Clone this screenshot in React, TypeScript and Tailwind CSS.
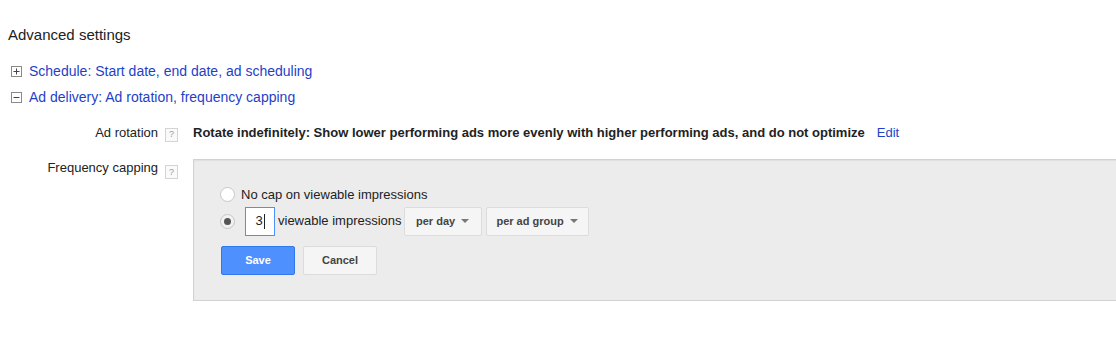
import React from "react";

const HelpBox = () => (
  <span className="inline-flex h-[14px] w-[13px] shrink-0 items-center justify-center border border-[#d4d4d4] bg-[#fafafa] text-[9px] leading-none text-[#999]">
    ?
  </span>
);

const ToggleBox = ({ open }: { open: boolean }) => (
  <svg width="11" height="11" viewBox="0 0 11 11" className="shrink-0">
    <rect x="0.5" y="0.5" width="10" height="10" fill="#fff" stroke="#8a8a8a" />
    <line x1="2.5" y1="5.5" x2="8.5" y2="5.5" stroke="#444" />
    {!open && <line x1="5.5" y1="2.5" x2="5.5" y2="8.5" stroke="#444" />}
  </svg>
);

const Caret = () => (
  <svg width="8" height="4" viewBox="0 0 8 4" className="ml-[6px]">
    <path d="M0 0 L8 0 L4 4 Z" fill="#777" />
  </svg>
);

const Radio = ({ checked }: { checked?: boolean }) => (
  <span
    className={`inline-flex h-[15px] w-[15px] shrink-0 items-center justify-center rounded-full border border-[#c6c6c6] ${
      checked ? "bg-[#f1f1f1]" : "bg-white"
    }`}
  >
    {checked && <span className="h-[7px] w-[7px] rounded-full bg-[#555]" />}
  </span>
);

export default function App() {
  return (
    <div className="h-[340px] w-full overflow-hidden bg-white font-['Liberation_Sans',Arial,sans-serif] text-[13px] text-[#222]">
      <div className="pl-2 pt-[26px] text-[15px] leading-[18px] text-[#222]">Advanced settings</div>

      <div className="mt-[19px] flex flex-col gap-[10px] pl-[11px]">
        <div className="flex items-center gap-[7px]">
          <ToggleBox open={false} />
          <a className="text-[14px] leading-[16px] text-[#1f3fc8]">
            Schedule: Start date, end date, ad scheduling
          </a>
        </div>
        <div className="flex items-center gap-[7px]">
          <ToggleBox open />
          <a className="text-[14px] leading-[16px] text-[#1f3fc8]">
            Ad delivery: Ad rotation, frequency capping
          </a>
        </div>
      </div>

      <div className="mt-[18px] flex items-center">
        <div className="w-[158px] text-right">Ad rotation</div>
        <div className="ml-[7px]">
          <HelpBox />
        </div>
        <div className="ml-[15px] flex items-center">
          <span className="font-bold">
            Rotate indefinitely: Show lower performing ads more evenly with higher performing ads, and do not optimize
          </span>
          <a className="ml-[12px] text-[#1f3fc8]">Edit</a>
        </div>
      </div>

      <div className="-mr-2 mt-[17px] flex items-start">
        <div className="w-[158px] text-right leading-[16px]">Frequency capping</div>
        <div className="ml-[7px] mt-[1px]">
          <HelpBox />
        </div>
        <div className="ml-[15px] flex-1">
          <div className="-mt-[1px] h-[142px] border border-[#d2d2d2] bg-[#ececec] pl-[26px] pt-[27px] shadow-[inset_0_1px_2px_rgba(0,0,0,0.06)]">
            <div className="flex items-center gap-[6px]">
              <Radio />
              <span className="leading-[16px]">No cap on viewable impressions</span>
            </div>
            <div className="mt-[4px] flex items-center">
              <Radio checked />
              <div className="ml-[10px] flex h-[29px] w-[30px] items-center justify-center border border-[#4d90fe] bg-white">
                <span>3</span>
                <span className="ml-[1px] h-[15px] w-px bg-[#222]" />
              </div>
              <span className="ml-[3px]">viewable impressions</span>
              <button className="ml-[2px] flex h-[29px] w-[78px] items-center justify-center rounded-[2px] border border-[#dcdcdc] bg-[#f5f5f5] text-[11px] font-bold text-[#444]">
                per day
                <Caret />
              </button>
              <button className="ml-[4px] flex h-[29px] w-[103px] items-center justify-center rounded-[2px] border border-[#dcdcdc] bg-[#f5f5f5] text-[11px] font-bold text-[#444]">
                per ad group
                <Caret />
              </button>
            </div>
            <div className="mt-[10px] flex items-center gap-[8px] pl-[1px]">
              <button className="flex h-[29px] w-[74px] items-center justify-center rounded-[2px] border border-[#3079ed] bg-[#4d90fe] text-[11px] font-bold text-white">
                Save
              </button>
              <button className="flex h-[29px] w-[74px] items-center justify-center rounded-[2px] border border-[#dcdcdc] bg-[#f5f5f5] text-[11px] font-bold text-[#444]">
                Cancel
              </button>
            </div>
          </div>
        </div>
      </div>
    </div>
  );
}
